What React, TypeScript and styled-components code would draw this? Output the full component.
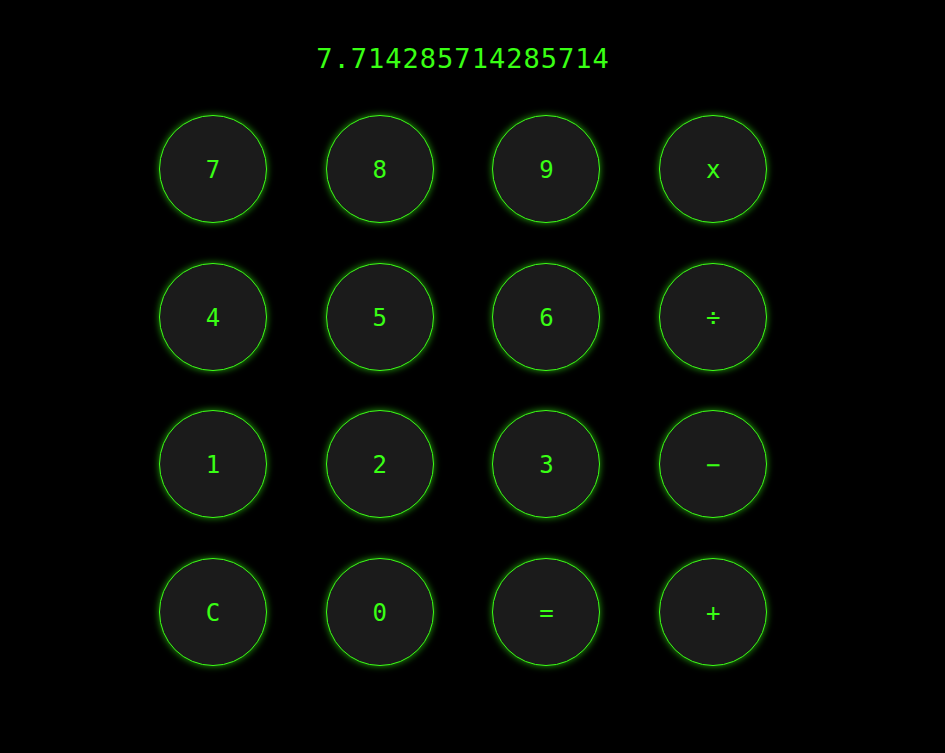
import React from "react";
import styled, { createGlobalStyle } from "styled-components";

const GlobalStyle = createGlobalStyle`
  html, body {
    margin: 0;
    padding: 0;
    background: #000;
  }
  body {
    font-family: "DejaVu Sans Mono", monospace;
  }
`;

const Page = styled.div`
  width: 926px;
  height: 753px;
  background: #000;
  display: flex;
  flex-direction: column;
  align-items: center;
  padding-top: 43px;
  box-sizing: border-box;
`;

const Display = styled.div`
  font-family: "DejaVu Sans Mono", monospace;
  font-size: 27px;
  letter-spacing: 1px;
  line-height: 32px;
  color: #39ff14;
  height: 32px;
  margin-bottom: 40px;
`;

const Keypad = styled.div`
  width: 667px;
  display: grid;
  grid-template-columns: repeat(4, 1fr);
  row-gap: 39.7px;
  justify-items: center;
`;

const Key = styled.button`
  width: 108px;
  height: 108px;
  box-sizing: border-box;
  border-radius: 50%;
  border: 1.2px solid #3cff16;
  background: #1b1b1b;
  box-shadow: 0 0 7px rgba(57, 255, 20, 0.6);
  color: #39ff14;
  font-family: "DejaVu Sans Mono", monospace;
  font-size: 24px;
  display: flex;
  align-items: center;
  justify-content: center;
  padding: 2px 0 0;
  cursor: pointer;
`;

const keys = ["7", "8", "9", "x", "4", "5", "6", "÷", "1", "2", "3", "−", "C", "0", "=", "+"];

export default function App() {
  return (
    <>
      <GlobalStyle />
      <Page>
        <Display>7.714285714285714</Display>
        <Keypad>
          {keys.map((k) => (
            <Key key={k}>{k}</Key>
          ))}
        </Keypad>
      </Page>
    </>
  );
}
